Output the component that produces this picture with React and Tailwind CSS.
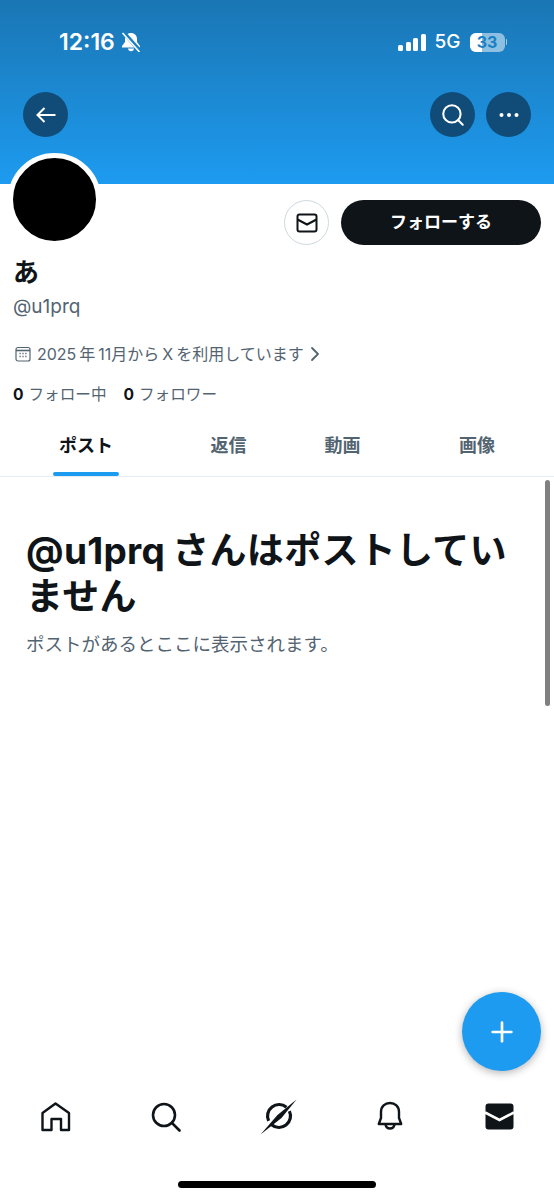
import { Search, Plus, ChevronRight } from 'lucide-react';

const font = "font-['Inter','Noto_Sans_CJK_JP',sans-serif]";

const tabs = [
  { label: 'ポスト', width: 'w-[172px]', active: true },
  { label: '返信', width: 'w-[113px]' },
  { label: '動画', width: 'w-[115px]' },
  { label: '画像', width: 'w-[154px]' },
];

function RoundButton({ children }) {
  return (
    <button className="w-[45px] h-[45px] rounded-full bg-[#104c77] flex items-center justify-center text-white">
      {children}
    </button>
  );
}

function MailOutline() {
  return (
    <svg width="24" height="24" viewBox="0 0 24 24" fill="none" stroke="#0f1419" strokeWidth="2">
      <rect x="2.500" y="3.500" width="19" height="17" rx="2" />
      <path d="M2.500 8.500 12 13.500l9.500-5" />
    </svg>
  );
}

function CalendarIcon() {
  return (
    <svg width="16" height="16" viewBox="0 0 16 16" fill="none" stroke="#536471" strokeWidth="1.200">
      <rect x="1" y="1.500" width="14" height="13.500" rx="2" />
      <path d="M1 4.500h14" strokeWidth="1.600" />
      <path d="M4.500 7.500h1.200M7.400 7.500h1.200M10.300 7.500h1.200M4.500 10.500h1.200M7.400 10.500h1.200M10.300 10.500h1.200" strokeWidth="1.300" />
    </svg>
  );
}

function StatusBar() {
  return (
    <div className="h-[82px] pt-[28px] pl-[59px] pr-[47px] flex items-start justify-between text-white">
      <div className="flex items-center gap-[6px]">
        <span className="text-[23px] leading-[28px] font-semibold">12:16</span>
        <svg width="20" height="20" viewBox="0 0 20 20" fill="white">
          <path d="M10 1C6.500 1 4 3.500 4 7v3l-3 4v1.500h18V14l-3-4V7c0-3.500-2.500-6-6-6z" />
          <path d="M7 16.500h6c0 1.500-1.300 2.700-3 2.700s-3-1.200-3-2.700z" />
          <path d="M2.500 0.500 19 19" stroke="#1a80c4" strokeWidth="4" />
          <path d="M1.500 1 18.500 20" stroke="white" strokeWidth="1.600" />
        </svg>
      </div>
      <div className="flex items-center gap-[9px] h-[28px]">
        <div className="flex items-end gap-[2.500px] h-[18px] -ml-[1px]">
          <span className="w-[5px] h-[6px] rounded-[1.500px] bg-white" />
          <span className="w-[5px] h-[9px] rounded-[1.500px] bg-white" />
          <span className="w-[5px] h-[13px] rounded-[1.500px] bg-white" />
          <span className="w-[5px] h-[17px] rounded-[1.500px] bg-white" />
        </div>
        <span className="text-[19px] leading-[28px] font-medium">5G</span>
        <div className="flex items-center gap-px">
          <div className="relative w-[35px] h-[19px] rounded-[6px] bg-white/50 overflow-hidden flex items-center justify-center">
            <span className="absolute left-0 top-0 h-full w-[12px] bg-white" />
            <span className="relative text-[16px] leading-none font-bold text-[#1a80c4]">33</span>
          </div>
          <span className="w-[1.500px] h-[6px] rounded-r bg-white/60" />
        </div>
      </div>
    </div>
  );
}

function BottomNav() {
  return (
    <div className="h-[80px] pl-[41px] pr-[40px] pt-[2px] flex items-start justify-between">
      {/* home */}
      <svg width="30" height="30" viewBox="0 0 30 30" fill="none" stroke="#0f1419" strokeWidth="2.400">
        <path d="M1.500 28V11L14.500 1.500 28 11v17h-8V17h-9.500v11z" strokeLinejoin="round" />
      </svg>
      <svg width="30" height="30" viewBox="0 0 30 30" fill="none" stroke="#0f1419" strokeWidth="2.600">
        <circle cx="13" cy="13" r="11" />
        <path d="M21 21 28.500 28.500" strokeLinecap="round" />
      </svg>
      {/* grok */}
      <svg width="38" height="36" viewBox="-2 0 38 36" className="-mt-[3px] -translate-x-[1px]" fill="none">
        <path d="M24.400 8.200A11.500 11.500 0 0 0 6.600 21.900" stroke="#0f1419" strokeWidth="3.200" />
        <path d="M27.400 12.100A11.500 11.500 0 0 1 9.600 25.800" stroke="#0f1419" strokeWidth="3.200" />
        <path d="M34.500 0.500 19.500 19-1.500 35.500 15.500 16z" fill="#0f1419" />
      </svg>
      {/* bell */}
      <svg width="26" height="30" viewBox="0 0 26 30" fill="none" stroke="#0f1419" strokeWidth="2.400" className="-mt-[1px] -translate-x-[2px]">
        <path d="M1.800 23 4 17v-6c0-5.500 4-9 9-9s9 3.500 9 9v6l2.200 6z" strokeLinejoin="round" />
        <path d="M8.500 23.500c.5 2.700 2.300 4 4.500 4s4-1.300 4.500-4" />
      </svg>
      {/* messages */}
      <svg width="29" height="27" viewBox="0 0 29 27" className="mt-[1px]">
        <rect x="0.500" y="0.500" width="28" height="26" rx="3" fill="#0f1419" />
        <path d="M0 9.500 14.500 17 29 9.500" fill="none" stroke="white" strokeWidth="2.600" />
      </svg>
    </div>
  );
}

export default function App() {
  return (
    <div className={`${font} relative w-[554px] h-[1200px] bg-white overflow-hidden flex flex-col`}>
      {/* Banner */}
      <div className="h-[184px] shrink-0 bg-gradient-to-b from-[#1a76b4] to-[#1d9bf0]">
        <StatusBar />
        <div className="pl-[23px] pr-[23px] pt-[10px] flex justify-between">
          <RoundButton>
            <svg width="20" height="16" viewBox="0 0 20 16" fill="none" stroke="white" strokeWidth="2">
              <path d="M1.500 8H19.500M8.500 1 1.500 8l7 7" />
            </svg>
          </RoundButton>
          <div className="flex gap-[11px]">
            <RoundButton>
              <Search size={26} strokeWidth={1.900} />
            </RoundButton>
            <RoundButton>
              <svg width="20" height="6" viewBox="0 0 20 6" fill="white">
                <circle cx="2.500" cy="3" r="2" />
                <circle cx="10" cy="3" r="2" />
                <circle cx="17.500" cy="3" r="2" />
              </svg>
            </RoundButton>
          </div>
        </div>
      </div>

      {/* Profile */}
      <div className="px-[13px]">
        <div className="relative flex justify-end items-start gap-[12px] pt-[16px]">
          <div className="absolute left-[-5px] top-[-31px] w-[93px] h-[93px] rounded-full bg-black border-[5px] border-white box-border" />
          <button className="w-[45px] h-[45px] rounded-full border-[1.500px] border-[#cfd9de] flex items-center justify-center">
            <MailOutline />
          </button>
          <button className="w-[200px] h-[45px] rounded-full bg-[#0f1419] text-white text-[17px] font-semibold">
            フォローする
          </button>
        </div>
        <div className="mt-[10px] text-[26px] leading-[36px] font-bold text-[#0f1419]">あ</div>
        <div className="mt-[4px] text-[19px] leading-[24px] text-[#536471]">@u1prq</div>
        <div className="mt-[23px] flex items-center text-[16px] leading-[24px] text-[#536471]">
          <span className="ml-[2px] mr-[6px]"><CalendarIcon /></span>
          <span className="[word-spacing:-1.500px]">2025 年 11月から X を利用しています</span>
          <ChevronRight size={24} strokeWidth={1.800} className="-ml-[1px]" />
        </div>
        <div className="mt-[17px] flex gap-[17px] text-[15.600px] leading-[24px] text-[#536471]">
          <span><b className="text-[#0f1419] mr-[5px]">0</b>フォロー中</span>
          <span><b className="text-[#0f1419] mr-[5px]">0</b>フォロワー</span>
        </div>
      </div>

      {/* Tabs */}
      <div className="mt-[17px] h-[53px] shrink-0 flex border-b border-[#e6ecf0]">
        {tabs.map((tab) => (
          <div key={tab.label} className={`${tab.width} relative flex justify-center pt-[9px] text-[18px] leading-[26px] font-bold ${tab.active ? 'text-[#0f1419]' : 'text-[#536471]'}`}>
            {tab.label}
            {tab.active && <span className="absolute bottom-0 left-[53px] w-[66px] h-[4px] rounded-full bg-[#1d9bf0]" />}
          </div>
        ))}
      </div>

      {/* Empty state */}
      <div className="flex-1 pl-[26px] pr-[26px] pt-[51px]">
        <h1 className="text-[37px] leading-[46px] font-bold text-[#0f1419] tracking-[0.3px] [word-spacing:-2px]">
          @u1prq さんはポストしていません
        </h1>
        <p className="mt-[12px] text-[18.500px] leading-[24px] text-[#536471]">ポストがあるとここに表示されます。</p>
      </div>

      <BottomNav />
      <div className="h-[20px] shrink-0 flex justify-center pt-[1px]">
        <span className="w-[198px] h-[7px] rounded-full bg-black" />
      </div>

      {/* Scrollbar */}
      <span className="absolute left-[545px] top-[480px] w-[5px] h-[226px] rounded-full bg-[#808080]" />

      {/* Compose button */}
      <button className="absolute left-[462px] top-[992px] w-[79px] h-[79px] rounded-full bg-[#1d9bf0] shadow-[0_2px_8px_rgba(0,0,0,0.3)] flex items-center justify-center text-white">
        <Plus size={32} strokeWidth={2} />
      </button>
    </div>
  );
}
